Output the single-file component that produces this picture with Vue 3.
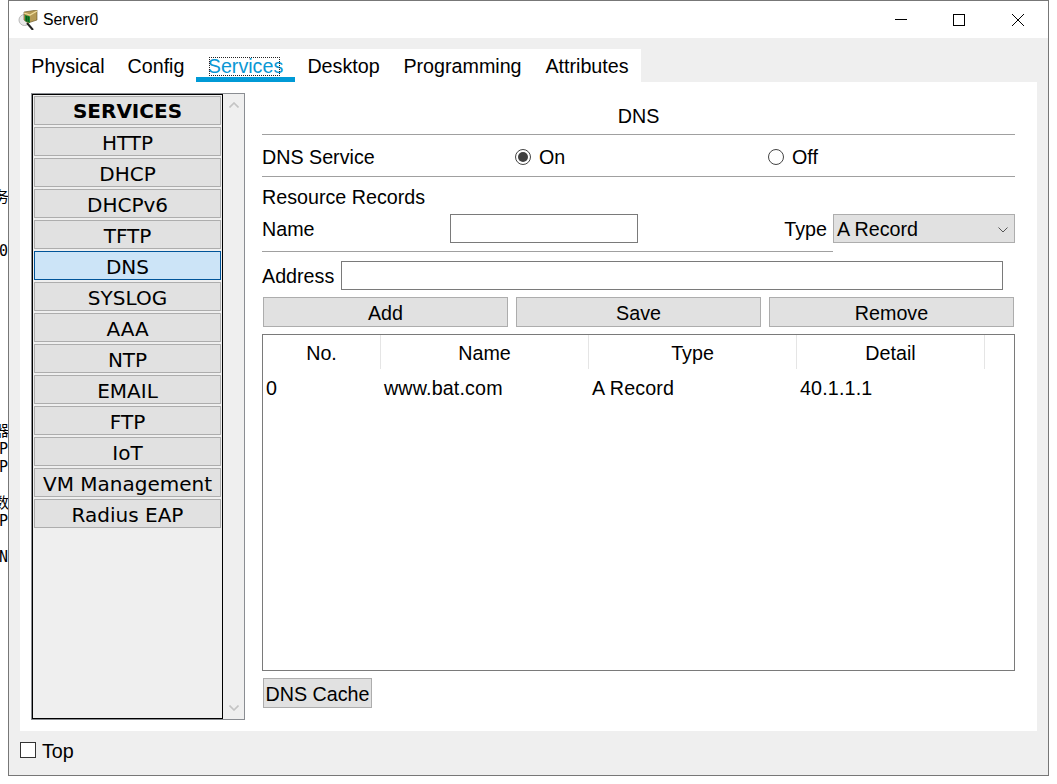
<template>
  <div class="desktop">
    <div class="behind">
      <div v-for="(line, i) in behindLines" :key="i" class="behind-line" :class="{ cut: line.cut }">{{ line.text }}</div>
    </div>

    <section class="window">
      <header class="titlebar">
        <svg class="app-icon" viewBox="0 0 20 20" width="20" height="20" aria-hidden="true">
          <circle cx="6.5" cy="10" r="5.5" fill="#e8e8e8" stroke="#b9b9b9" />
          <path d="M9 13 L15 20" stroke="#222" stroke-width="2" />
          <path d="M6 2 L19 0 L19 10 L10 13 L6 10 Z" fill="#b59a55" stroke="#5f4f22" stroke-width="0.6" />
          <path d="M6 3 L12 5 L19 1" fill="none" stroke="#f0dc9c" stroke-width="1.2" />
          <path d="M7 5 L12 6.5 L12 13 L7 11 Z" fill="#168a2d" />
          <path d="M8.5 6 V11.5 M10.3 6.5 V12" stroke="#0b3d14" stroke-width="0.7" />
        </svg>
        <span class="title">Server0</span>
        <div class="controls">
          <span class="control">
            <svg viewBox="0 0 12 12" width="12" height="12"><path d="M0 5.5 H12" stroke="#000" /></svg>
          </span>
          <span class="control">
            <svg viewBox="0 0 12 12" width="12" height="12"><rect x="0.5" y="0.5" width="11" height="11" fill="none" stroke="#000" /></svg>
          </span>
          <span class="control">
            <svg viewBox="0 0 12 12" width="12" height="12"><path d="M0 0 L12 12 M12 0 L0 12" stroke="#000" /></svg>
          </span>
        </div>
      </header>

      <div class="body">
        <nav class="tabs">
          <span
            v-for="tab in tabs"
            :key="tab.label"
            class="tab"
            :class="{ active: tab.label === 'Services' }"
            :style="{ width: `${tab.width}px` }"
          >
            <span class="tab-label">{{ tab.label }}</span>
          </span>
        </nav>

        <div class="panel">
          <aside class="sidebar">
            <div class="service-list">
              <div
                v-for="item in services"
                :key="item"
                class="service"
                :class="{ heading: item === 'SERVICES', selected: item === 'DNS' }"
              >
                {{ item }}
              </div>
            </div>
            <div class="scroll">
              <svg viewBox="0 0 10 6" width="10" height="6"><path d="M0.5 5.5 L5 1 L9.5 5.5" fill="none" stroke="#c4c4c4" stroke-width="1.6" /></svg>
              <svg viewBox="0 0 10 6" width="10" height="6"><path d="M0.5 0.5 L5 5 L9.5 0.5" fill="none" stroke="#c4c4c4" stroke-width="1.6" /></svg>
            </div>
          </aside>

          <main class="pane">
            <div class="pane-title">DNS</div>

            <div class="service-row">
              <span class="service-label">DNS Service</span>
              <label class="radio-group">
                <i class="radio checked"></i>
                <span>On</span>
              </label>
              <label class="radio-group">
                <i class="radio"></i>
                <span>Off</span>
              </label>
            </div>

            <div class="records-title">Resource Records</div>

            <div class="name-row">
              <span class="name-label">Name</span>
              <input class="field name-field" type="text" />
              <span class="type-label">Type</span>
              <div class="select">
                <span>A Record</span>
                <svg viewBox="0 0 10 6" width="10" height="6"><path d="M0.5 0.5 L5 5 L9.5 0.5" fill="none" stroke="#555" /></svg>
              </div>
            </div>
            <div class="name-rule"></div>

            <div class="address-row">
              <span class="address-label">Address</span>
              <input class="field address-field" type="text" />
            </div>

            <div class="actions">
              <button v-for="action in actions" :key="action" class="btn" type="button">{{ action }}</button>
            </div>

            <div class="table">
              <div class="table-head">
                <span v-for="col in columns" :key="col">{{ col }}</span>
                <span></span>
              </div>
              <div v-for="row in records" :key="row.no" class="table-row">
                <span>{{ row.no }}</span>
                <span>{{ row.name }}</span>
                <span>{{ row.type }}</span>
                <span>{{ row.detail }}</span>
              </div>
            </div>

            <button class="btn cache-btn" type="button">DNS Cache</button>
          </main>
        </div>

        <footer class="footer">
          <i class="checkbox"></i>
          <span class="top-label">Top</span>
        </footer>
      </div>
    </section>
  </div>
</template>

<script setup>
const tabs = [
  { label: 'Physical', width: 96 },
  { label: 'Config', width: 80 },
  { label: 'Services', width: 99 },
  { label: 'Desktop', width: 97 },
  { label: 'Programming', width: 141 },
  { label: 'Attributes', width: 108 }
]

const services = [
  'SERVICES',
  'HTTP',
  'DHCP',
  'DHCPv6',
  'TFTP',
  'DNS',
  'SYSLOG',
  'AAA',
  'NTP',
  'EMAIL',
  'FTP',
  'IoT',
  'VM Management',
  'Radius EAP'
]

const actions = ['Add', 'Save', 'Remove']
const columns = ['No.', 'Name', 'Type', 'Detail']
const records = [{ no: 0, name: 'www.bat.com', type: 'A Record', detail: '40.1.1.1' }]

// text of the window behind, only a sliver of it shows
const behindLines = [
  { text: '务', cut: true },
  { text: '' },
  { text: '' },
  { text: '0' },
  ...Array.from({ length: 9 }, () => ({ text: '' })),
  { text: '器', cut: true },
  { text: 'P' },
  { text: 'P' },
  { text: '' },
  { text: '数', cut: true },
  { text: 'P' },
  { text: '' },
  { text: 'NS' }
]
</script>

<style>
html,
body {
  margin: 0;
  background: #fff;
}
</style>

<style scoped>
.desktop {
  display: flex;
  width: 1057px;
  height: 784px;
  overflow: hidden;
  background: #fff;
  color: #000;
  font-family: "Liberation Sans", Arial, sans-serif;
  font-size: 19.7px;
}

.behind {
  width: 8px;
  flex: none;
  overflow: hidden;
  padding-top: 188px;
  box-sizing: border-box;
  font-family: "DejaVu Sans Mono", "Noto Sans CJK SC", monospace;
  font-size: 15px;
  white-space: nowrap;
}

.behind-line {
  height: 18px;
  line-height: 18px;
  margin-left: -1px;
}

.behind-line.cut {
  margin-left: -6px;
}

.window {
  width: 1041px;
  height: 776px;
  flex: none;
  box-sizing: border-box;
  border: 1px solid #777;
  display: flex;
  flex-direction: column;
}

.titlebar {
  height: 37px;
  flex: none;
  display: flex;
  align-items: center;
  background: #fff;
}

.app-icon {
  margin-left: 9px;
  margin-right: 5px;
}

.title {
  font-size: 15.8px;
}

.controls {
  margin-left: auto;
  padding-right: 1px;
  display: flex;
}

.control {
  width: 58px;
  height: 37px;
  display: flex;
  align-items: center;
  justify-content: center;
}

.control:nth-child(2) {
  margin-right: 1px;
}

.body {
  flex: 1;
  min-height: 0;
  background: #efefef;
  padding: 11px 11px 0;
  display: flex;
  flex-direction: column;
}

.tabs {
  width: 621px;
  height: 33px;
  flex: none;
  display: flex;
  background: #fff;
}

.tab {
  box-sizing: border-box;
  height: 33px;
  flex: none;
  padding-top: 6px;
  border-bottom: 5px solid transparent;
  display: flex;
  align-items: center;
  justify-content: center;
  white-space: nowrap;
}

.tab.active {
  border-bottom-color: #009ad6;
  color: #0a97d4;
}

.tab-label {
  position: relative;
}

.tab.active .tab-label::after {
  content: '';
  position: absolute;
  left: 1px;
  right: 3px;
  top: 2px;
  bottom: 2px;
  border: 1px dotted #222;
}

.panel {
  height: 649px;
  flex: none;
  box-sizing: border-box;
  background: #fff;
  padding: 11px 0 0 11px;
  display: flex;
  gap: 17px;
  align-items: flex-start;
}

.sidebar {
  width: 214px;
  height: 627px;
  flex: none;
  box-sizing: border-box;
  border: 1px solid #8a8d92;
  display: flex;
  background: #efefef;
}

.service-list {
  width: 191px;
  flex: none;
  box-sizing: border-box;
  border: 1px solid #000;
  padding: 1px;
  display: flex;
  flex-direction: column;
  gap: 2px;
  font-family: "DejaVu Sans", Verdana, sans-serif;
  font-size: 20px;
}

.service {
  height: 29px;
  flex: none;
  box-sizing: border-box;
  border: 1px solid #adadad;
  background: #e1e1e1;
  padding-top: 2px;
  display: flex;
  align-items: center;
  justify-content: center;
  white-space: nowrap;
}

.service.heading {
  padding-top: 0;
  font-weight: 700;
}

.service.selected {
  background: #cce4f7;
  border-color: #005499;
}

.scroll {
  flex: 1;
  display: flex;
  flex-direction: column;
  align-items: center;
  justify-content: space-between;
  padding: 8px 0;
}

.pane {
  width: 753px;
  flex: none;
  display: flex;
  flex-direction: column;
}

.pane-title {
  height: 42px;
  box-sizing: border-box;
  border-bottom: 1px solid #a0a0a0;
  padding-top: 6px;
  display: flex;
  align-items: center;
  justify-content: center;
}

.service-row {
  height: 42px;
  box-sizing: border-box;
  border-bottom: 1px solid #a0a0a0;
  padding-top: 3px;
  display: flex;
  align-items: center;
}

.service-label {
  width: 253px;
  flex: none;
}

.radio-group {
  width: 253px;
  flex: none;
  display: flex;
  align-items: center;
  gap: 8px;
}

.radio {
  width: 16px;
  height: 16px;
  box-sizing: border-box;
  border: 1px solid #444;
  border-radius: 50%;
  background: #fff;
  display: flex;
  align-items: center;
  justify-content: center;
}

.radio.checked::after {
  content: '';
  width: 10px;
  height: 10px;
  border-radius: 50%;
  background: #404040;
}

.records-title {
  height: 37px;
  display: flex;
  align-items: center;
  padding-top: 3px;
  box-sizing: border-box;
}

.name-row {
  height: 29px;
  display: flex;
  align-items: center;
}

.name-label {
  width: 188px;
  padding-top: 2px;
}

.field {
  height: 29px;
  box-sizing: border-box;
  border: 1px solid #7a7a7a;
  border-radius: 0;
  outline: none;
  padding: 0 3px;
  margin: 0;
  background: #fff;
  font: inherit;
}

.name-field {
  width: 188px;
}

.type-label {
  margin-left: auto;
  margin-right: 6px;
  padding-top: 2px;
}

.select {
  width: 182px;
  height: 29px;
  box-sizing: border-box;
  border: 1px solid #adadad;
  background: #e1e1e1;
  padding: 2px 6px 0 3px;
  display: flex;
  align-items: center;
  justify-content: space-between;
}

.name-rule {
  width: 571px;
  height: 1px;
  margin-top: 8px;
  background: #a0a0a0;
}

.address-row {
  margin-top: 9px;
  display: flex;
  align-items: center;
}

.address-label {
  width: 79px;
  padding-top: 2px;
}

.address-field {
  width: 662px;
}

.actions {
  margin-top: 7px;
  padding-left: 1px;
  display: flex;
  gap: 8px;
}

.btn {
  width: 245px;
  height: 30px;
  box-sizing: border-box;
  border: 1px solid #adadad;
  border-radius: 0;
  background: #e1e1e1;
  color: #000;
  padding: 2px 0 0;
  font: inherit;
}

.table {
  margin-top: 7px;
  height: 337px;
  box-sizing: border-box;
  border: 1px solid #7a7a7a;
  background: #fff;
}

.table-head,
.table-row {
  display: grid;
  grid-template-columns: 118px 208px 208px 188px 1fr;
}

.table-head {
  height: 34px;
}

.table-head span {
  border-right: 1px solid #e5e5e5;
  padding-top: 2px;
  display: flex;
  align-items: center;
  justify-content: center;
}

.table-head span:last-child {
  border-right: 0;
}

.table-row {
  height: 38px;
  align-items: center;
  letter-spacing: 0.15px;
}

.table-row span {
  padding-left: 3px;
}

.cache-btn {
  width: 109px;
  margin-top: 7px;
  margin-left: 1px;
}

.footer {
  flex: 1;
  display: flex;
  align-items: center;
  gap: 6px;
  padding-bottom: 6px;
}

.top-label {
  padding-top: 2px;
}

.checkbox {
  width: 16px;
  height: 16px;
  box-sizing: border-box;
  border: 1px solid #333;
  background: #fff;
}
</style>
